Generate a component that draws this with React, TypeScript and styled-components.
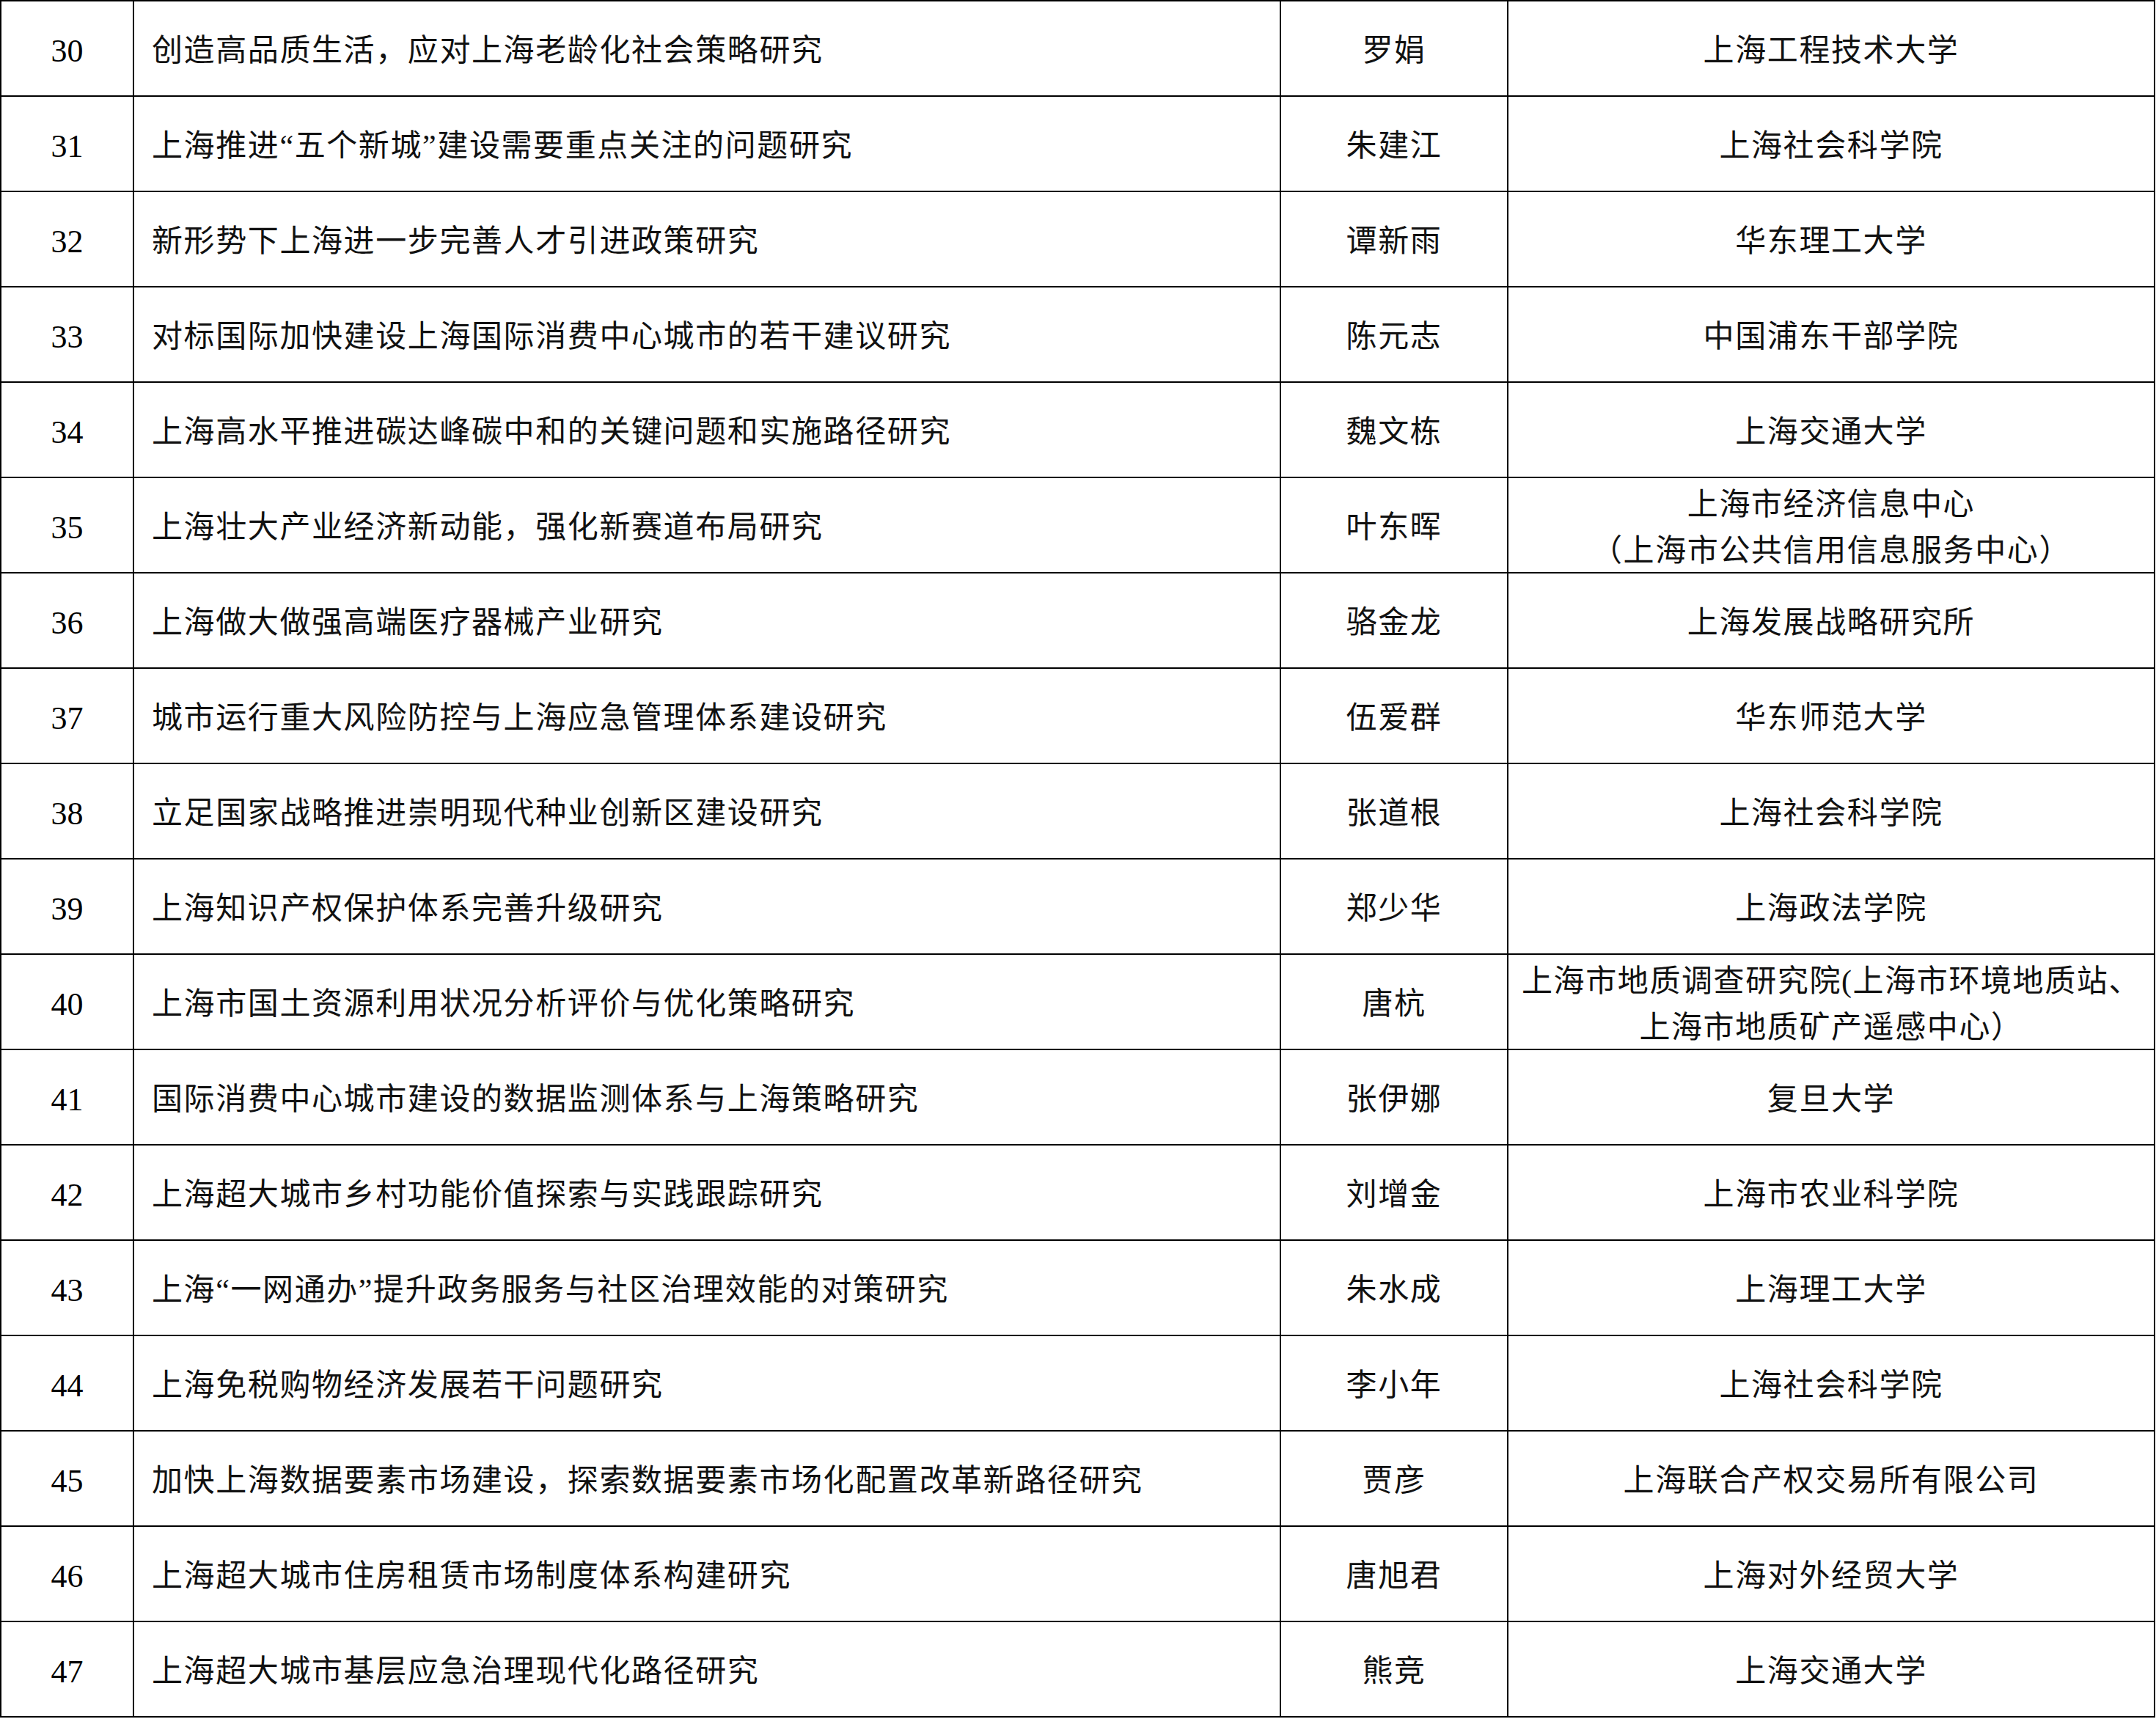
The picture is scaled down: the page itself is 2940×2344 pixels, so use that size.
import React from "react";
import styled, { createGlobalStyle } from "styled-components";

const Global = createGlobalStyle`
  html, body {
    margin: 0;
    padding: 0;
    background: #ffffff;
  }
  body {
    font-family: "Liberation Serif", "Noto Sans CJK SC", serif;
    color: #000;
  }
`;

const Table = styled.div`
  display: grid;
  grid-template-columns: 181px 1564px 310px 882px;
  grid-auto-rows: 130px;
  border-top: 2px solid #000;
  border-left: 2px solid #000;
  width: max-content;
`;

const Cell = styled.div<{ $align?: "left" | "center" }>`
  box-sizing: border-box;
  border-right: 2px solid #000;
  border-bottom: 2px solid #000;
  display: flex;
  flex-direction: column;
  align-items: ${(p) => (p.$align === "left" ? "flex-start" : "center")};
  justify-content: center;
  padding: ${(p) => (p.$align === "left" ? "7px 0 0 24px" : "7px 0 0 0")};
  font-family: "Liberation Serif", "Noto Sans CJK SC", serif;
  font-size: 42px;
  line-height: 63px;
  letter-spacing: 1.6px;
  color: #111;
  white-space: nowrap;
  overflow: hidden;
`;

const Num = styled.span`
  font-size: 44px;
  letter-spacing: 0;
  line-height: 63px;
  color: #000;
`;

const Line = styled.span`
  display: block;
  text-align: center;
`;

type Row = { n: number; title: string; name: string; org: string[] };

const rows: Row[] = [
  { n: 30, title: "创造高品质生活，应对上海老龄化社会策略研究", name: "罗娟", org: ["上海工程技术大学"] },
  { n: 31, title: "上海推进“五个新城”建设需要重点关注的问题研究", name: "朱建江", org: ["上海社会科学院"] },
  { n: 32, title: "新形势下上海进一步完善人才引进政策研究", name: "谭新雨", org: ["华东理工大学"] },
  { n: 33, title: "对标国际加快建设上海国际消费中心城市的若干建议研究", name: "陈元志", org: ["中国浦东干部学院"] },
  { n: 34, title: "上海高水平推进碳达峰碳中和的关键问题和实施路径研究", name: "魏文栋", org: ["上海交通大学"] },
  { n: 35, title: "上海壮大产业经济新动能，强化新赛道布局研究", name: "叶东晖", org: ["上海市经济信息中心", "（上海市公共信用信息服务中心）"] },
  { n: 36, title: "上海做大做强高端医疗器械产业研究", name: "骆金龙", org: ["上海发展战略研究所"] },
  { n: 37, title: "城市运行重大风险防控与上海应急管理体系建设研究", name: "伍爱群", org: ["华东师范大学"] },
  { n: 38, title: "立足国家战略推进崇明现代种业创新区建设研究", name: "张道根", org: ["上海社会科学院"] },
  { n: 39, title: "上海知识产权保护体系完善升级研究", name: "郑少华", org: ["上海政法学院"] },
  { n: 40, title: "上海市国土资源利用状况分析评价与优化策略研究", name: "唐杭", org: ["上海市地质调查研究院(上海市环境地质站、", "上海市地质矿产遥感中心）"] },
  { n: 41, title: "国际消费中心城市建设的数据监测体系与上海策略研究", name: "张伊娜", org: ["复旦大学"] },
  { n: 42, title: "上海超大城市乡村功能价值探索与实践跟踪研究", name: "刘增金", org: ["上海市农业科学院"] },
  { n: 43, title: "上海“一网通办”提升政务服务与社区治理效能的对策研究", name: "朱水成", org: ["上海理工大学"] },
  { n: 44, title: "上海免税购物经济发展若干问题研究", name: "李小年", org: ["上海社会科学院"] },
  { n: 45, title: "加快上海数据要素市场建设，探索数据要素市场化配置改革新路径研究", name: "贾彦", org: ["上海联合产权交易所有限公司"] },
  { n: 46, title: "上海超大城市住房租赁市场制度体系构建研究", name: "唐旭君", org: ["上海对外经贸大学"] },
  { n: 47, title: "上海超大城市基层应急治理现代化路径研究", name: "熊竞", org: ["上海交通大学"] },
];

export default function App() {
  return (
    <>
      <Global />
      <Table>
        {rows.map((r) => (
          <React.Fragment key={r.n}>
            <Cell>
              <Num>{r.n}</Num>
            </Cell>
            <Cell $align="left">{r.title}</Cell>
            <Cell>{r.name}</Cell>
            <Cell>
              {r.org.map((l, i) => (
                <Line key={i}>{l}</Line>
              ))}
            </Cell>
          </React.Fragment>
        ))}
      </Table>
    </>
  );
}
